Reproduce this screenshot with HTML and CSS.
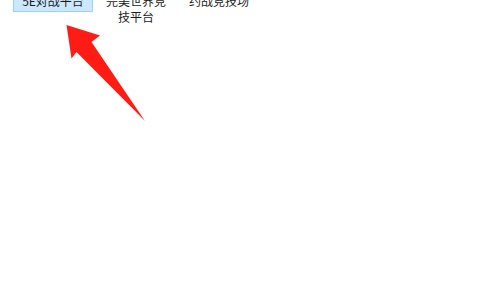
FILE: index.html
```
<!DOCTYPE html>
<html lang="zh-CN">
<head>
  <meta charset="UTF-8" />
  <title>对战平台</title>
  <link rel="stylesheet" href="styles.css">
</head>
<body>

  <main class="file-list">
    <div class="file-item selected">5E对战平台</div>
    <div class="file-item">完美世界竞技平台</div>
    <div class="file-item">约战竞技场</div>
  </main>

  <!-- red pointer arrow -->
  <svg class="pointer" width="500" height="300" viewBox="0 0 500 300">
    <polygon points="66.5,25 100,35.5 91.5,42 145,121 76.5,52 71.5,58.5" fill="#fe1c14" />
  </svg>

</body>
</html>
```

FILE: styles.css
```
body {
  margin: 0;
  background: #fff;
  font-family: "Noto Sans CJK SC", "Microsoft YaHei", sans-serif;
  overflow: hidden;
}

.file-list {
  display: flex;
  align-items: flex-start;
  gap: 3px;
  padding-left: 13px;
  margin-top: -9px;
}

.file-item {
  width: 80px;
  box-sizing: border-box;
  padding: 1px 4px 2px;
  border: 1px solid transparent;
  font-size: 12px;
  line-height: 16px;
  color: #1b1b1b;
  text-align: center;
}

.file-item.selected {
  background: #cce8ff;
  border-color: #99d1ff;
}

.pointer {
  position: absolute;
  top: 0;
  left: 0;
}
```
